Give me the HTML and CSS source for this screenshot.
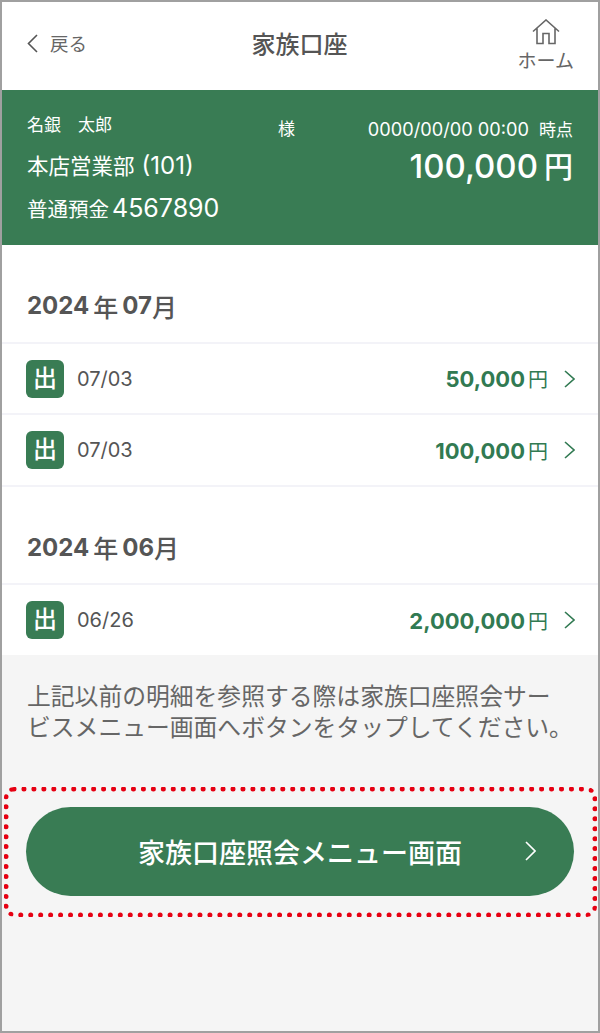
FILE: index.html
```html
<!DOCTYPE html>
<html lang="ja">
<head>
  <meta charset="UTF-8" />
  <meta name="viewport" content="width=device-width, initial-scale=1" />
  <title>家族口座</title>
  <link rel="stylesheet" href="styles.css">
</head>
<body>
  <div class="frame">
    <header class="topbar">
      <a class="back">
        <svg class="back-icon" width="11" height="19" viewBox="0 0 11 19"><path d="M10 1 L1.500 9.500 L10 18" /></svg>
        <span>戻る</span>
      </a>
      <h1 class="title">家族口座</h1>
      <a class="home">
        <svg class="home-icon" width="28" height="26" viewBox="0 0 28 26"><path d="M1 12.500 L14 1 L27 12.500 M5 9.500 V24.500 H11 V14.500 H17 V24.500 H23 V9.500" /></svg>
        <span>ホーム</span>
      </a>
    </header>

    <section class="account">
      <div class="account-top">
        <span class="owner">名銀　太郎</span>
        <span class="sama">様</span>
        <span class="asof">0000/00/00 00:00<span class="asof-label">時点</span></span>
      </div>
      <div class="account-mid">
        <span class="branch">本店営業部<span class="branch-code">(101)</span></span>
        <span class="balance">100,000<span class="yen">円</span></span>
      </div>
      <div class="account-no">普通預金<span class="number">4567890</span></div>
    </section>

    <section class="list">
      <h2 class="month">2024<span class="unit">年</span>07<span class="unit-end">月</span></h2>
      <div class="row row-first">
        <span class="tag">出</span>
        <span class="date">07/03</span>
        <span class="amount">50,000<span class="amount-yen">円</span></span>
        <svg class="chev" width="11" height="18" viewBox="0 0 11 18"><path d="M1 1 L10 9 L1 17" /></svg>
      </div>
      <div class="row">
        <span class="tag">出</span>
        <span class="date">07/03</span>
        <span class="amount">100,000<span class="amount-yen">円</span></span>
        <svg class="chev" width="11" height="18" viewBox="0 0 11 18"><path d="M1 1 L10 9 L1 17" /></svg>
      </div>

      <h2 class="month month-next">2024<span class="unit">年</span>06<span class="unit-end">月</span></h2>
      <div class="row row-last">
        <span class="tag">出</span>
        <span class="date">06/26</span>
        <span class="amount">2,000,000<span class="amount-yen">円</span></span>
        <svg class="chev" width="11" height="18" viewBox="0 0 11 18"><path d="M1 1 L10 9 L1 17" /></svg>
      </div>
    </section>

    <p class="note">上記以前の明細を参照する際は家族口座照会サー<br>ビスメニュー画面へボタンをタップしてください。</p>

    <div class="action">
      <a class="menu-btn">
        <span>家族口座照会メニュー画面</span>
        <svg class="menu-chev" width="11" height="20" viewBox="0 0 11 20"><path d="M1 1 L10 10 L1 19" /></svg>
      </a>
      <div class="highlight"></div>
    </div>
  </div>
</body>
</html>
```

FILE: styles.css
```css
* {
  box-sizing: border-box;
}
body {
  margin: 0;
  font-family: Inter, "Noto Sans CJK JP", "Noto Sans", sans-serif;
  color: #555;
}
.frame {
  width: 600px;
  height: 1033px;
  border: 2px solid #a0a0a0;
  background: #f5f5f5;
  overflow: hidden;
}

/* header */
.topbar {
  height: 88px;
  background: #fff;
  display: flex;
  align-items: center;
  justify-content: space-between;
  padding: 0 24px 6px 25px;
  position: relative;
}
.back {
  display: flex;
  align-items: center;
  gap: 12px;
  font-size: 18.500px;
  color: #666;
}
.back-icon, .home-icon, .chev, .menu-chev {
  fill: none;
  stroke-width: 1.6;
}
.back-icon {
  stroke: #555;
}
.title {
  position: absolute;
  left: 0;
  right: 1px;
  margin: 0 0 2px;
  text-align: center;
  font-size: 24px;
  font-weight: 500;
  color: #555;
}
.home {
  display: flex;
  flex-direction: column;
  align-items: center;
  gap: 6px;
  font-size: 19px;
  line-height: 22px;
  color: #666;
  margin-top: 6px;
}
.home-icon {
  stroke: #666;
}

/* account summary */
.account {
  height: 155px;
  background: #397c54;
  color: #fff;
  padding: 22px 25px 0;
}
.account-top {
  display: flex;
  font-size: 17px;
  line-height: 26px;
}
.owner {
  width: 251px;
}
.sama {
  margin-top: 4px;
}
.asof {
  margin-top: 4px;
  margin-left: auto;
  font-size: 18.200px;
}
.asof-label {
  font-size: 17px;
  margin-left: 10px;
}
.account-mid {
  display: flex;
  justify-content: space-between;
  margin-top: 3px;
  font-size: 21.500px;
  line-height: 40px;
}
.branch-code {
  font-size: 24px;
  margin-left: 7px;
}
.balance {
  font-size: 33px;
  font-weight: 500;
}
.yen {
  font-size: 29px;
  margin-left: 6px;
}
.account-no {
  margin-top: 2px;
  font-size: 20.500px;
  line-height: 36px;
}
.number {
  font-size: 25px;
  margin-left: 3px;
}

/* list */
.list {
  background: #fff;
}
.month {
  margin: 0;
  height: 99px;
  padding: 24px 25px 0;
  display: flex;
  align-items: center;
  font-size: 24px;
  font-weight: 700;
  color: #555;
  border-bottom: 2px solid #f3f3f8;
}
.unit {
  font-size: 25px;
  font-weight: 500;
  margin: 0 4px;
}
.unit-end {
  font-size: 25px;
  font-weight: 500;
}
.month-next {
  height: 98px;
}
.row {
  height: 72px;
  padding: 0 23px 0 24px;
  display: flex;
  align-items: center;
  border-bottom: 2px solid #f3f3f8;
}
.row-first {
  height: 71px;
}
.row-last {
  border-bottom: none;
  height: 70px;
}
.tag {
  width: 38px;
  height: 38px;
  border-radius: 6px;
  background: #397c54;
  color: #fff;
  font-size: 24px;
  font-weight: 500;
  line-height: 38px;
  text-align: center;
}
.date {
  margin-left: 13px;
  font-size: 20px;
  color: #555;
  flex: 1;
}
.amount {
  font-size: 22px;
  font-weight: 700;
  color: #317a52;
}
.amount-yen {
  font-size: 20px;
  font-weight: 400;
  margin-left: 3px;
}
.chev {
  stroke: #317a52;
  margin-left: 16px;
}

/* note */
.note {
  margin: 0;
  padding: 26px 0 0 25px;
  font-size: 23.800px;
  line-height: 31px;
  white-space: nowrap;
  color: #666;
}

/* button */
.action {
  padding: 0 24px;
  margin-top: 64px;
  position: relative;
}
.menu-btn {
  height: 89px;
  border-radius: 44.500px;
  background: #397c54;
  color: #fff;
  font-size: 27px;
  font-weight: 500;
  display: flex;
  align-items: center;
  justify-content: center;
  position: relative;
}
.menu-chev {
  stroke: #fff;
  position: absolute;
  right: 38px;
  top: 34px;
}
.highlight {
  position: absolute;
  left: 2px;
  right: 1px;
  top: -20px;
  height: 130px;
  border: 5px dotted #e60012;
  border-radius: 10px;
}
```
